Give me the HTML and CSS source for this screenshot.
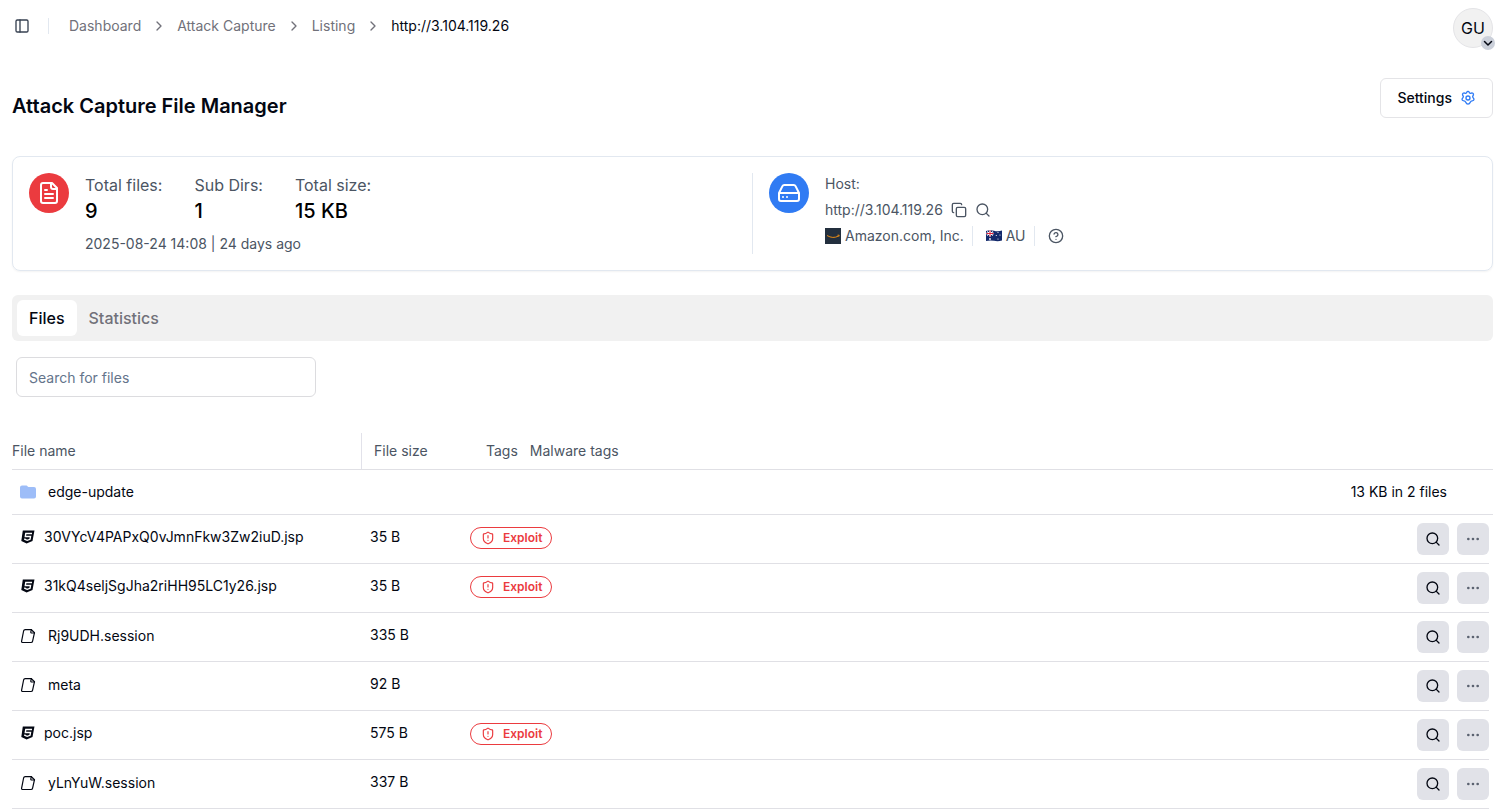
FILE: index.html
```html
<!DOCTYPE html>
<html lang="en">
<head>
<meta charset="UTF-8">
<meta name="viewport" content="width=device-width, initial-scale=1">
<title>Attack Capture File Manager</title>
<link rel="stylesheet" href="styles.css">
</head>
<body>

<!-- shared icons -->
<svg class="sprite" aria-hidden="true">
  <symbol id="chevron" viewBox="0 0 24 24"><path d="m9 18 6-6-6-6"/></symbol>
  <symbol id="search" viewBox="0 0 24 24"><circle cx="11" cy="11" r="8"/><path d="m21 21-4.3-4.3"/></symbol>
  <symbol id="dots" viewBox="0 0 24 24"><circle cx="5" cy="12" r="1"/><circle cx="12" cy="12" r="1"/><circle cx="19" cy="12" r="1"/></symbol>
  <symbol id="shield" viewBox="0 0 24 24"><path d="M20 13c0 5-3.500 7.500-7.660 8.950a1 1 0 0 1-.67-.01C7.500 20.500 4 18 4 13V6a1 1 0 0 1 1-1c2 0 4.500-1.200 6.240-2.720a1.170 1.170 0 0 1 1.520 0C14.510 3.810 17 5 19 5a1 1 0 0 1 1 1z"/><path d="M12 8v4M12 16h.01"/></symbol>
  <symbol id="html5" viewBox="0 0 16 16"><path fill="currentColor" stroke="none" d="M2.800 1.500h11.700l-2 10.600-5.900 2.400-5.300-2.400z"/><path d="M12 4.500H5.800l-.5 3h5.200l-.5 2.800-2.800 1-2.400-1 .1-.8" stroke="#fff" stroke-width="1.400" stroke-linecap="butt" stroke-linejoin="miter"/></symbol>
  <symbol id="file" viewBox="0 0 16 16"><path d="M5.200 1.700h6.200l3.100 3-1.900 8.400a1.700 1.700 0 0 1-1.700 1.400H2.700a1.100 1.100 0 0 1-1.100-1.400L3.600 3a1.700 1.700 0 0 1 1.600-1.300z"/><path d="m11.400 1.700-.6 2.200c-.1.700.2 1.100.8 1.100h2.900"/></symbol>
</svg>

<header class="topbar">
  <button class="icon-btn" aria-label="Toggle sidebar">
    <svg class="icon" viewBox="0 0 24 24"><rect x="3" y="3" width="18" height="18" rx="2"/><path d="M9 3v18"/></svg>
  </button>
  <nav class="breadcrumb" aria-label="Breadcrumb">
    <a href="#">Dashboard</a>
    <svg class="icon"><use href="#chevron"/></svg>
    <a href="#">Attack Capture</a>
    <svg class="icon"><use href="#chevron"/></svg>
    <a href="#">Listing</a>
    <svg class="icon"><use href="#chevron"/></svg>
    <span class="current">http://3.104.119.26</span>
  </nav>
  <button class="avatar" aria-label="Account menu">GU
    <span class="avatar-badge"><svg class="icon" viewBox="0 0 24 24"><path d="m5 9 7 7 7-7"/></svg></span>
  </button>
</header>

<main>
  <div class="title-row">
    <h1>Attack Capture File Manager</h1>
    <button class="settings">Settings
      <svg class="icon" viewBox="0 0 24 24"><path d="M10.300 3.200c.4-1.600 3-1.600 3.400 0a2.200 2.200 0 0 0 3.300 1.500c1.500-1 3.600.8 3.200 2.500-.5 1.300-1.200 1.800-1.200 3 0 1.700 2 2.200 2 3.800 0 1.400-1.300 2.300-2.800 2.400-1.700.1-2.300.8-2.800 2-.5 1.400-1 2.900-3.400 2.900s-2.900-1.500-3.400-2.900c-.5-1.200-1.100-1.900-2.800-2C4.300 16.300 3 15.400 3 14c0-1.600 2-2.100 2-3.800 0-1.200-.7-1.700-1.200-3-.4-1.700 1.700-3.500 3.200-2.500a2.200 2.200 0 0 0 3.300-1.500z"/><circle cx="12" cy="12" r="3"/></svg>
    </button>
  </div>

  <section class="summary">
    <div class="summary-part">
      <span class="round red"><svg class="icon" viewBox="0 0 24 24"><path d="M15 2H6a2 2 0 0 0-2 2v16a2 2 0 0 0 2 2h12a2 2 0 0 0 2-2V7z"/><path d="M14 2v4a2 2 0 0 0 2 2h4M10 9H8M16 13H8M16 17H8"/></svg></span>
      <div>
        <dl class="totals">
          <div><dt>Total files:</dt><dd>9</dd></div>
          <div><dt>Sub Dirs:</dt><dd>1</dd></div>
          <div><dt>Total size:</dt><dd>15 KB</dd></div>
        </dl>
        <p class="date">2025-08-24 14:08 | 24 days ago</p>
      </div>
    </div>
    <div class="summary-part host">
      <span class="round blue"><svg class="icon" viewBox="0 0 24 24"><path d="M22 12H2M5.450 5.110 2 12v6a2 2 0 0 0 2 2h16a2 2 0 0 0 2-2v-6l-3.450-6.890A2 2 0 0 0 16.760 4H7.240a2 2 0 0 0-1.790 1.110zM6 16h.01M10 16h.01"/></svg></span>
      <div class="host-info">
        <p>Host:</p>
        <div class="host-line">
          <span>http://3.104.119.26</span>
          <button class="icon-btn" aria-label="Copy host"><svg class="icon" viewBox="0 0 24 24"><rect x="8" y="8" width="14" height="14" rx="2"/><path d="M4 16a2 2 0 0 1-2-2V4a2 2 0 0 1 2-2h10a2 2 0 0 1 2 2"/></svg></button>
          <button class="icon-btn" aria-label="Search host"><svg class="icon"><use href="#search"/></svg></button>
        </div>
        <div class="host-meta">
          <span class="meta-item">
            <svg class="logo" viewBox="0 0 16 16"><path fill="#232f3e" d="M0 0h16v16H0z"/><path d="M2 7.500q6 3.600 11.500.5M12.500 7.200h1.700l-.5 1.500" fill="none" stroke="#e88b15"/></svg>
            Amazon.com, Inc.
          </span>
          <span class="meta-item">
            <svg class="flag" viewBox="0 0 16 12"><path fill="#13296b" d="M0 1q4-1.500 8-.3t8-.2v10q-4 1.200-8 .3T0 11z"/><path d="m1 1.500 6 4M7 1.500l-6 4" stroke="#fff"/><path d="M4 .5v6M.5 3.500h7" stroke="#fff" stroke-width="2"/><path d="M4 .5v6M.5 3.500h7" stroke="#d8223b"/><g fill="#fff"><circle cx="4" cy="9" r=".9"/><circle cx="12" cy="2.500" r=".6"/><circle cx="12" cy="9" r=".6"/><circle cx="10.300" cy="5.500" r=".6"/><circle cx="14" cy="5" r=".6"/></g></svg>
            AU
          </span>
          <button class="icon-btn" aria-label="Help"><svg class="icon" viewBox="0 0 24 24"><circle cx="12" cy="12" r="10"/><path d="M9.090 9a3 3 0 0 1 5.830 1c0 2-3 3-3 3M12 17h.01"/></svg></button>
        </div>
      </div>
    </div>
  </section>

  <div class="tabs" role="tablist">
    <button class="tab active" role="tab" aria-selected="true">Files</button>
    <button class="tab" role="tab" aria-selected="false">Statistics</button>
  </div>

  <input class="search-box" type="text" placeholder="Search for files" aria-label="Search for files">

  <table class="files">
    <thead>
      <tr><th>File name</th><th>File size</th><th>Tags</th><th>Malware tags</th></tr>
    </thead>
    <tbody>
      <tr class="folder">
        <td class="name"><svg class="icon folder-icon" viewBox="0 0 16 16"><path d="M2 1.500h4.500c.8 0 1.200 1.500 2 1.500H14a2 2 0 0 1 2 2v7.500a2 2 0 0 1-2 2H2a2 2 0 0 1-2-2v-9a2 2 0 0 1 2-2z"/></svg><a href="#">edge-update</a></td>
        <td class="folder-size">13 KB in 2 files</td>
      </tr>
      <tr>
        <td class="name code"><svg class="icon"><use href="#html5"/></svg><a href="#">30VYcV4PAPxQ0vJmnFkw3Zw2iuD.jsp</a></td>
        <td>35 B</td>
        <td><span class="tag"><svg class="icon"><use href="#shield"/></svg>Exploit</span></td>
        <td class="actions"><button aria-label="Search"><svg class="icon"><use href="#search"/></svg></button><button aria-label="More"><svg class="icon dots"><use href="#dots"/></svg></button></td>
      </tr>
      <tr>
        <td class="name code"><svg class="icon"><use href="#html5"/></svg><a href="#">31kQ4seljSgJha2riHH95LC1y26.jsp</a></td>
        <td>35 B</td>
        <td><span class="tag"><svg class="icon"><use href="#shield"/></svg>Exploit</span></td>
        <td class="actions"><button aria-label="Search"><svg class="icon"><use href="#search"/></svg></button><button aria-label="More"><svg class="icon dots"><use href="#dots"/></svg></button></td>
      </tr>
      <tr>
        <td class="name"><svg class="icon"><use href="#file"/></svg><a href="#">Rj9UDH.session</a></td>
        <td>335 B</td>
        <td></td>
        <td class="actions"><button aria-label="Search"><svg class="icon"><use href="#search"/></svg></button><button aria-label="More"><svg class="icon dots"><use href="#dots"/></svg></button></td>
      </tr>
      <tr>
        <td class="name"><svg class="icon"><use href="#file"/></svg><a href="#">meta</a></td>
        <td>92 B</td>
        <td></td>
        <td class="actions"><button aria-label="Search"><svg class="icon"><use href="#search"/></svg></button><button aria-label="More"><svg class="icon dots"><use href="#dots"/></svg></button></td>
      </tr>
      <tr>
        <td class="name code"><svg class="icon"><use href="#html5"/></svg><a href="#">poc.jsp</a></td>
        <td>575 B</td>
        <td><span class="tag"><svg class="icon"><use href="#shield"/></svg>Exploit</span></td>
        <td class="actions"><button aria-label="Search"><svg class="icon"><use href="#search"/></svg></button><button aria-label="More"><svg class="icon dots"><use href="#dots"/></svg></button></td>
      </tr>
      <tr>
        <td class="name"><svg class="icon"><use href="#file"/></svg><a href="#">yLnYuW.session</a></td>
        <td>337 B</td>
        <td></td>
        <td class="actions"><button aria-label="Search"><svg class="icon"><use href="#search"/></svg></button><button aria-label="More"><svg class="icon dots"><use href="#dots"/></svg></button></td>
      </tr>
    </tbody>
  </table>
</main>

</body>
</html>
```
FILE: styles.css
```css
* {
  box-sizing: border-box;
}

body {
  margin: 0;
  padding: 8px 11px 0 12px;
  font-family: Inter, sans-serif;
  font-size: 14px;
  line-height: 20px;
  color: #030712;
  background: #fff;
}

h1, p, dl, dd {
  margin: 0;
}

a {
  color: inherit;
  text-decoration: none;
}

button {
  font: inherit;
  color: inherit;
  cursor: pointer;
}

.sprite {
  display: none;
}

.icon {
  width: 16px;
  height: 16px;
  flex: none;
  fill: none;
  stroke: currentColor;
  stroke-width: 2;
  stroke-linecap: round;
  stroke-linejoin: round;
}

.icon-btn {
  display: flex;
  padding: 0;
  border: none;
  background: none;
}

/* top bar */
.topbar {
  display: flex;
  align-items: flex-start;
}

.topbar > .icon-btn {
  padding: 10px 2px;
  color: #374151;
}

.breadcrumb {
  display: flex;
  align-items: center;
  gap: 10px;
  height: 16px;
  margin: 10px auto 0 16px;
  padding-left: 20px;
  border-left: 1px solid #e2e8f0;
  color: #71717a;
}

.current {
  color: #030712;
}

.avatar {
  position: relative;
  width: 40px;
  height: 40px;
  padding: 0;
  border: 1px solid #e4e4e7;
  border-radius: 50%;
  background: #f1f1f1;
  font-size: 16px;
}

.avatar-badge {
  position: absolute;
  right: -3px;
  bottom: -3px;
  display: flex;
  align-items: center;
  justify-content: center;
  width: 14px;
  height: 14px;
  border-radius: 50%;
  background: #cbd0da;
}

.avatar-badge .icon {
  width: 12px;
  height: 12px;
  stroke-width: 3;
}

/* title */
.title-row {
  display: flex;
  align-items: flex-start;
  justify-content: space-between;
  padding: 30px 0 36px;
}

h1 {
  padding-top: 14px;
  font-size: 20px;
  line-height: 28px;
  font-weight: 600;
}

.settings {
  display: flex;
  align-items: center;
  gap: 8px;
  height: 40px;
  padding: 0 16px;
  border: 1px solid #e4e4e7;
  border-radius: 6px;
  background: #fff;
  font-weight: 500;
}

.settings .icon {
  color: #2f7bf5;
}

/* summary card */
.summary {
  display: grid;
  grid-template-columns: 1fr 1fr;
  padding: 16px 17px 16px 16px;
  border: 1px solid #e2e8f0;
  border-radius: 8px;
  box-shadow: 0 1px 2px rgba(0, 0, 0, 0.05);
  color: #4b5563;
}

.summary-part {
  display: flex;
  gap: 16px;
}

.host {
  padding-left: 16px;
  border-left: 1px solid #e2e8f0;
}

.round {
  display: flex;
  align-items: center;
  justify-content: center;
  width: 40px;
  height: 40px;
  flex: none;
  border-radius: 50%;
  color: #fff;
}

.round .icon {
  width: 24px;
  height: 24px;
}

.red {
  background: #eb3b3f;
}

.blue {
  background: #307bf3;
}

.totals {
  display: flex;
  gap: 32px;
  font-size: 16px;
  line-height: 24px;
}

.totals dd {
  color: #000;
  font-size: 20px;
  line-height: 28px;
  font-weight: 500;
}

.date {
  padding: 9px 0 0;
}

.host-info {
  display: flex;
  flex-direction: column;
  gap: 6px;
  padding-top: 1px;
}

.host-line, .host-meta {
  display: flex;
  align-items: center;
  gap: 8px;
}

.meta-item {
  display: flex;
  align-items: center;
  gap: 4px;
  padding-right: 8px;
  border-right: 1px solid #e2e8f0;
}

.meta-item + .meta-item, .meta-item + .icon-btn {
  margin-left: 5px;
}

.logo {
  width: 16px;
  height: 16px;
}

.flag {
  width: 16px;
  height: 12px;
}

/* tabs */
.tabs {
  display: flex;
  margin-top: 24px;
  padding: 5px;
  border-radius: 6px;
  background: #f1f1f1;
}

.tab {
  padding: 6px 12px;
  border: none;
  border-radius: 6px;
  background: none;
  color: #71717a;
  font-size: 16px;
  line-height: 24px;
  font-weight: 500;
}

.tab.active {
  background: #fff;
  color: #030712;
}

.search-box {
  display: block;
  width: 300px;
  height: 40px;
  margin: 16px 4px 36px;
  padding: 0 12px;
  border: 1px solid #dcdcdf;
  border-radius: 6px;
  font: inherit;
}

.search-box::placeholder {
  color: #64748b;
  opacity: 1;
}

/* file table */
.files, .files thead, .files tbody {
  display: block;
}

.files tr {
  display: grid;
  grid-template-columns: 350px 100px 1fr auto;
  align-items: center;
  height: 49px;
  margin-right: 4px;
  border-bottom: 1px solid #e0e0e5;
}

.files thead tr {
  grid-template-columns: 350px 100px auto 1fr;
  height: 37px;
  margin-right: 0;
}

.files .folder {
  grid-template-columns: 350px 1fr;
  height: 45px;
  margin-right: 0;
}

.files th {
  padding: 8px 0 8px 12px;
  color: #4b5563;
  font-weight: 400;
  text-align: left;
}

.files th:first-child {
  padding-left: 0;
  border-right: 1px solid #e2e2ea;
}

.files th:nth-child(3) {
  padding-left: 24px;
}

.files td {
  padding: 0 8px 2px;
}

.files td:nth-child(2) {
  padding-bottom: 4px;
}

.files .name {
  display: flex;
  align-items: center;
  gap: 12px;
}

.files .code {
  gap: 8px;
  padding-bottom: 4px;
}

.files .folder td {
  padding-bottom: 0;
}

.name .icon {
  stroke-width: 1.2;
}

.name .folder-icon {
  fill: #9dbdf8;
  stroke: none;
}

.files td.folder-size {
  padding: 0 46px 0 0;
  text-align: right;
}

.tag {
  display: inline-flex;
  align-items: center;
  gap: 8px;
  height: 22px;
  padding: 0 9px 0 10px;
  border: 1px solid #eb3b3f;
  border-radius: 11px;
  color: #eb3b3f;
  font-size: 12px;
  line-height: 16px;
  font-weight: 600;
  vertical-align: middle;
}

.tag .icon {
  width: 14px;
  height: 14px;
}

.files .actions {
  display: flex;
  gap: 8px;
  padding: 0;
}

.actions button {
  display: flex;
  align-items: center;
  justify-content: center;
  width: 32px;
  height: 32px;
  padding: 0;
  border: none;
  border-radius: 6px;
  background: #e1e2e8;
}

.actions .dots {
  color: #5b6270;
}
```
